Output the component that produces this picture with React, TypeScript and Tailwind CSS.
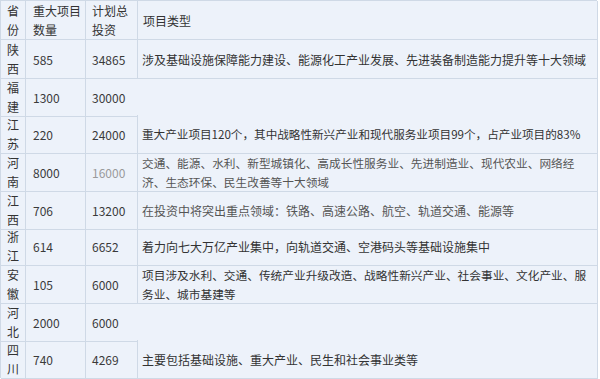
import React from "react";

type Row = {
  prov: string;
  count: string;
  invest: string;
  desc?: React.ReactNode;
  h: string;
  open?: boolean;
  investClass?: string;
  descClass?: string;
};

const rows: Row[] = [
  {
    prov: "陕西",
    count: "585",
    invest: "34865",
    desc: "涉及基础设施保障能力建设、能源化工产业发展、先进装备制造能力提升等十大领域",
    h: "h-[38px]",
  },
  { prov: "福建", count: "1300", invest: "30000", h: "h-[37px]", open: true },
  {
    prov: "江苏",
    count: "220",
    invest: "24000",
    descClass: "text-[11.6px]",
    desc: "重大产业项目120个，其中战略性新兴产业和现代服务业项目99个，占产业项目的83%",
    h: "h-[38px]",
  },
  {
    prov: "河南",
    count: "8000",
    invest: "16000",
    investClass: "text-[#9a9a9a]",
    descClass: "text-[11.7px] text-[#555]",
    desc: (
      <>
        交通、能源、水利、新型城镇化、高成长性服务业、先进制造业、现代农业、网络经
        <br />
        济、生态环保、民生改善等十大领域
      </>
    ),
    h: "h-[38px]",
  },
  {
    prov: "江西",
    count: "706",
    invest: "13200",
    descClass: "text-[#555]",
    desc: "在投资中将突出重点领域：铁路、高速公路、航空、轨道交通、能源等",
    h: "h-[36px]",
  },
  {
    prov: "浙江",
    count: "614",
    invest: "6652",
    desc: "着力向七大万亿产业集中，向轨道交通、空港码头等基础设施集中",
    h: "h-[38px]",
  },
  {
    prov: "安徽",
    count: "105",
    invest: "6000",
    descClass: "text-[11.7px]",
    desc: (
      <>
        项目涉及水利、交通、传统产业升级改造、战略性新兴产业、社会事业、文化产业、服
        <br />
        务业、城市基建等
      </>
    ),
    h: "h-[38px]",
  },
  { prov: "河北", count: "2000", invest: "6000", h: "h-[37px]", open: true },
  {
    prov: "四川",
    count: "740",
    invest: "4269",
    desc: "主要包括基础设施、重大产业、民生和社会事业类等",
    h: "h-[38px]",
  },
];

const cell = "flex items-center border-b border-r border-[#cfd9e6]";

export default function App() {
  return (
    <div
      className="w-[600px] h-[379px] bg-white overflow-hidden text-[12px] leading-[19px] text-[#333]"
      style={{ fontFamily: '"Noto Sans CJK SC", "Noto Sans", sans-serif' }}
    >
      <div className="w-[597px] bg-[#edf2fa] border-l border-t border-[#cfd9e6]">
        <div className="grid grid-cols-[25px_60px_52px_460px] h-[39px]">
          <div className={`${cell} justify-center text-center px-[6px]`}>省份</div>
          <div className={`${cell} pl-[7px] pr-[4px]`}>重大项目数量</div>
          <div className={`${cell} pl-[6px] pr-[4px]`}>计划总投资</div>
          <div className={`${cell} pl-[5px]`}>项目类型</div>
        </div>
        {rows.map((r) => (
          <div key={r.prov} className={`grid grid-cols-[25px_60px_52px_460px] ${r.h}`}>
            <div className={`${cell} justify-center text-center px-[6px]`}>{r.prov}</div>
            <div className={`${cell} pl-[7px] text-[#3a3a3a]`}>{r.count}</div>
            <div
              className={`flex items-center border-b border-[#cfd9e6] pl-[6px] ${
                r.open ? "" : "border-r"
              } ${r.investClass ?? "text-[#3a3a3a]"}`}
            >
              {r.invest}
            </div>
            <div
              className={`flex items-center border-r border-[#cfd9e6] pl-[4px] whitespace-nowrap ${
                r.open ? "" : "border-b"
              } ${r.descClass ?? ""}`}
            >
              <div>{r.desc}</div>
            </div>
          </div>
        ))}
      </div>
    </div>
  );
}
